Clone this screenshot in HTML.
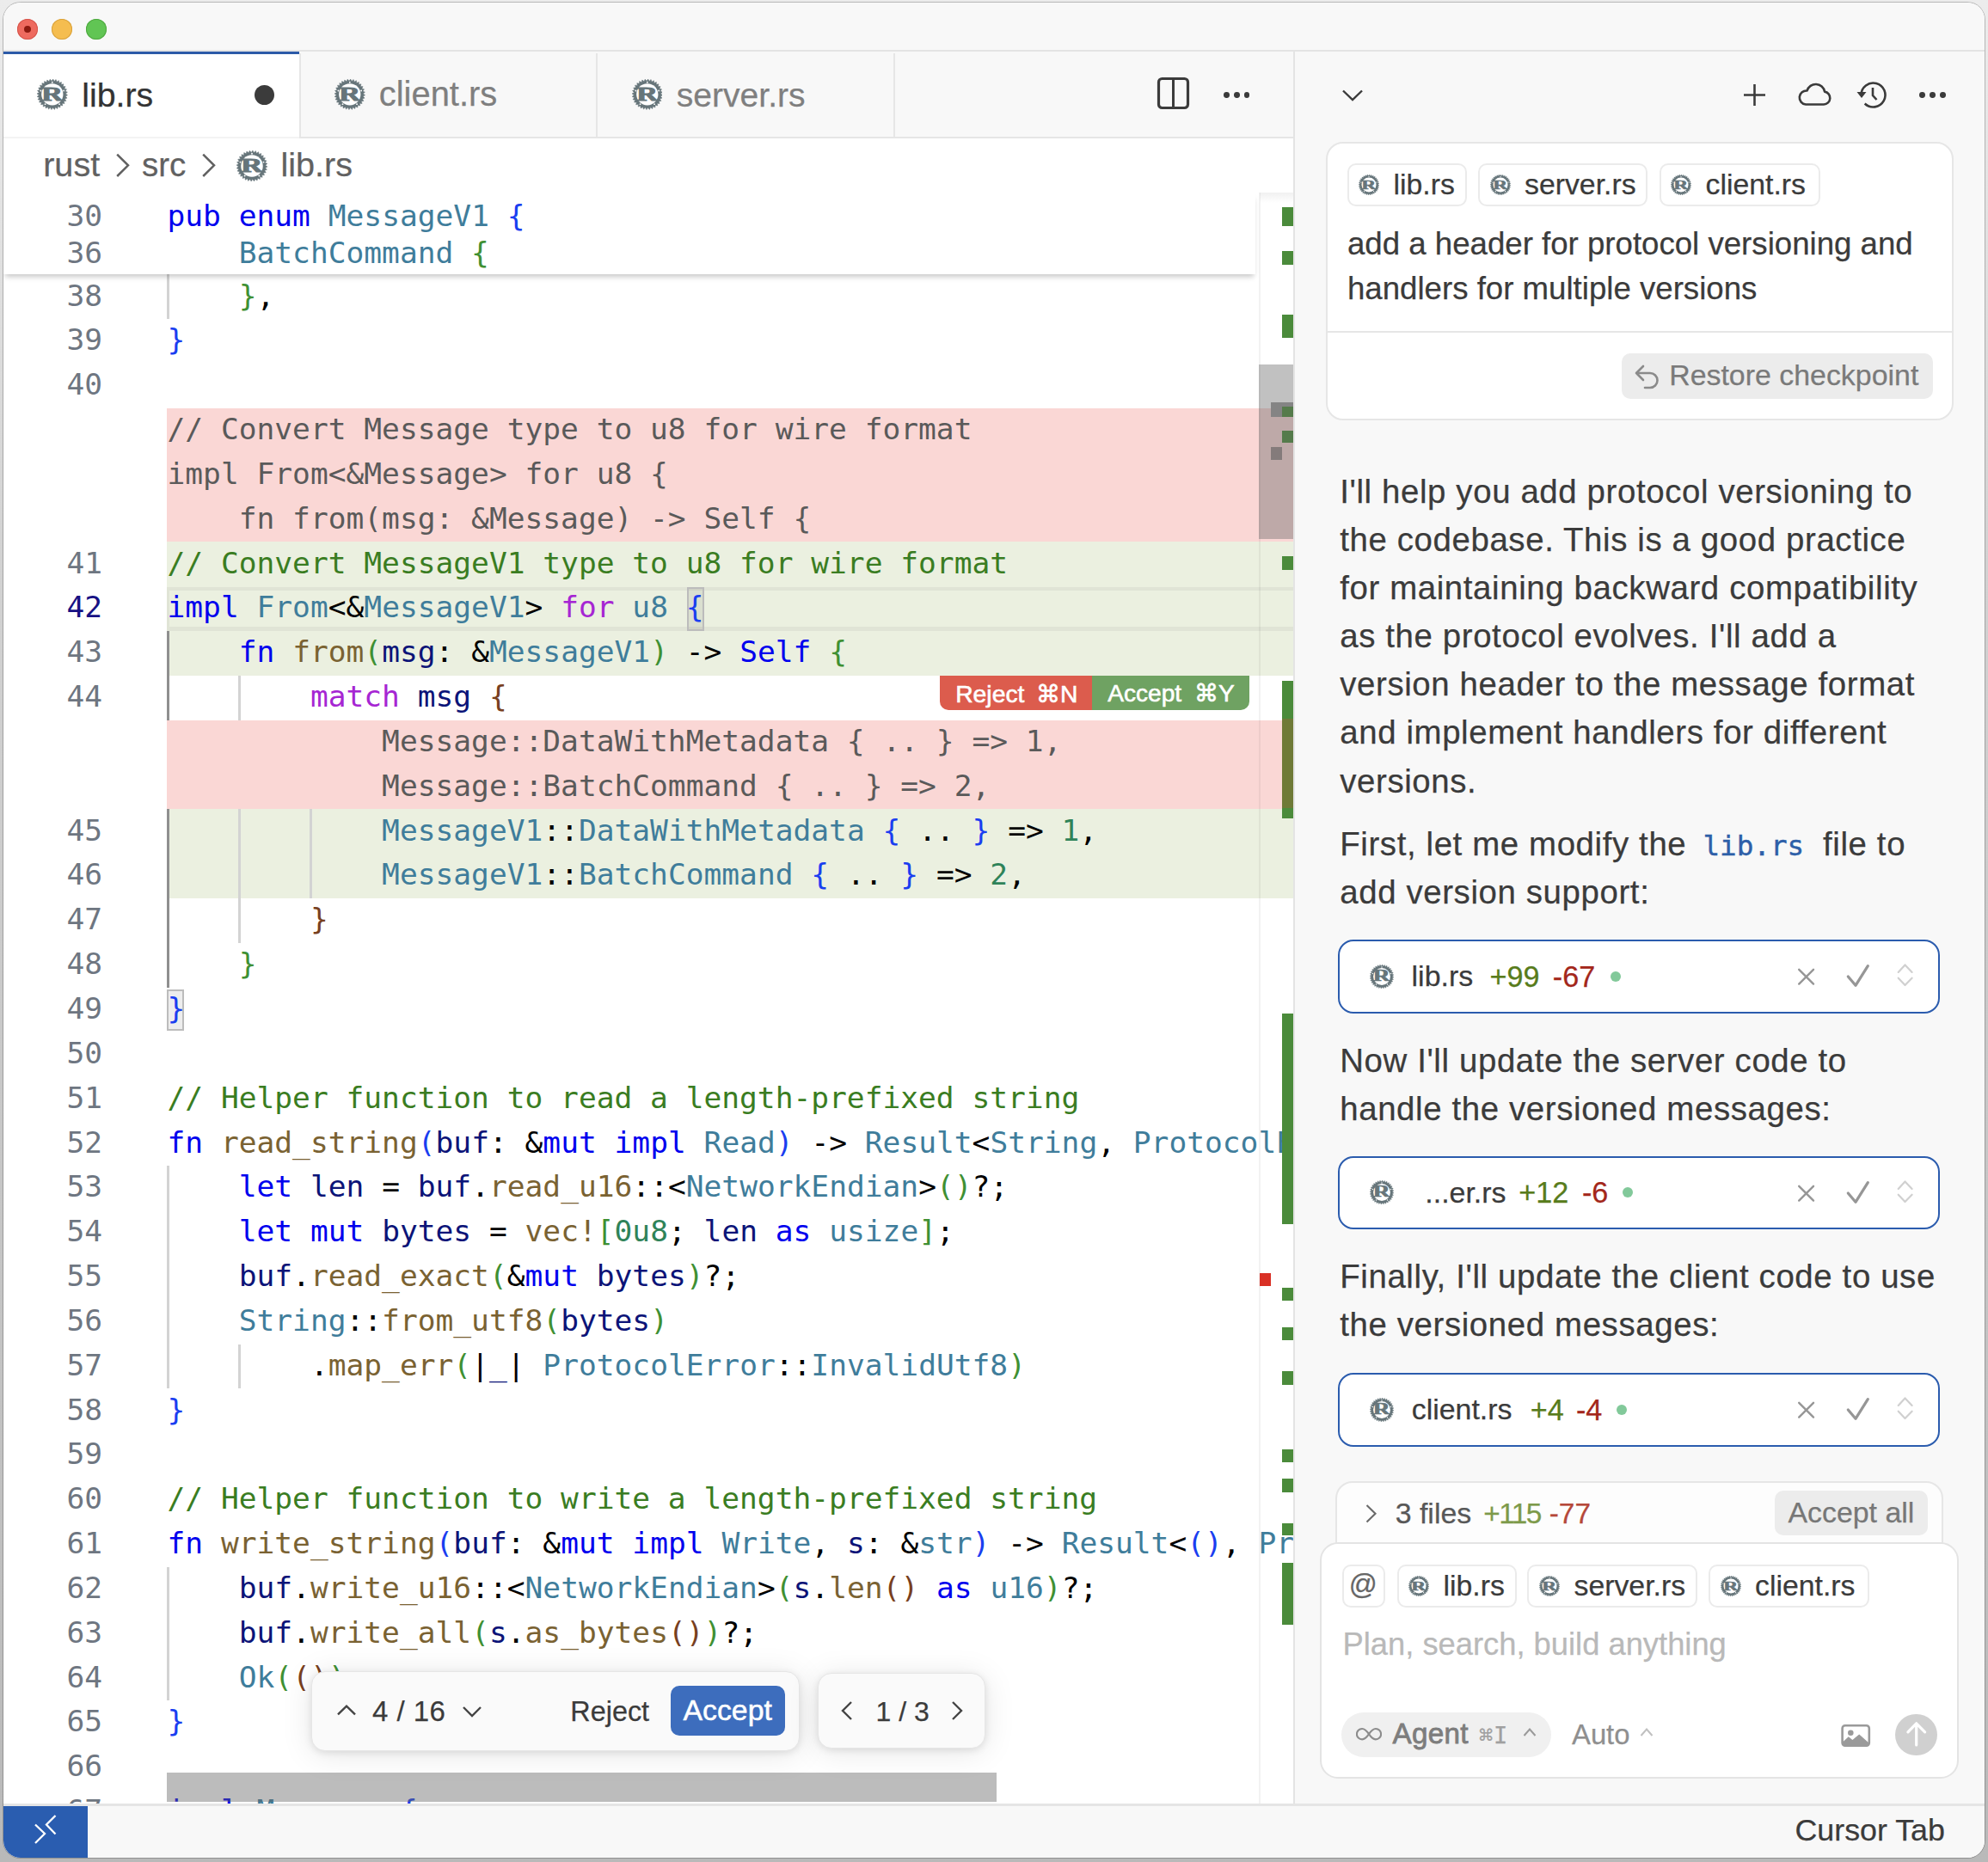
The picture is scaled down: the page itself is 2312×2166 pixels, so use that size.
<!DOCTYPE html><html lang="en"><head><meta charset="utf-8"><title>lib.rs - Cursor</title><style>
html,body{margin:0;padding:0}
body{width:2312px;height:2166px;position:relative;overflow:hidden;background:linear-gradient(#ececec,#d2d2d2 30%,#b9b9b9);font-family:'Liberation Sans',sans-serif;color:#3b3b3b}
.abs{position:absolute}
#win{position:absolute;left:4px;top:3px;width:2304.3px;height:2158.3px;border-radius:20px;overflow:hidden;background:#fff;box-shadow:0 0 0 1px rgba(0,0,0,.22)}
#win>*{position:absolute}
.code{position:absolute;left:0;white-space:pre;font-family:'DejaVu Sans Mono','Liberation Mono',monospace;font-size:34.56px;line-height:51.84px;height:51.84px;letter-spacing:0;color:#000}
.ln{position:absolute;width:115px;text-align:right;font-family:'DejaVu Sans Mono','Liberation Mono',monospace;font-size:34.56px;line-height:51.84px;height:51.84px;color:#6e7681}
.t{position:absolute;white-space:nowrap;line-height:1;-webkit-text-stroke:0.25px currentColor}
.pill{position:absolute;box-sizing:border-box;height:50px;border:2px solid #ebebeb;border-radius:10px;background:#fff}
</style></head><body><div id="win"><div style="left:0.0px;top:0.0px;width:2306.0px;height:56.0px;background:#f8f8f8"></div><div style="left:0.0px;top:55.0px;width:2306.0px;height:1.8px;background:#e4e4e4"></div><div style="left:16.0px;top:19.0px;width:24.0px;height:24.0px;border-radius:50%;background:#ee6a5f;box-shadow:inset 0 0 0 1px #d5564c"></div><div style="left:56.0px;top:19.0px;width:24.0px;height:24.0px;border-radius:50%;background:#f5bd4f;box-shadow:inset 0 0 0 1px #d9a23c"></div><div style="left:95.7px;top:19.0px;width:24.0px;height:24.0px;border-radius:50%;background:#61c554;box-shadow:inset 0 0 0 1px #4fa840"></div><div style="left:24.0px;top:27.0px;width:8.0px;height:8.0px;border-radius:50%;background:#8c1a10"></div><div style="left:0.0px;top:56.8px;width:1501.0px;height:101.2px;background:#f8f8f8"></div><div style="left:0.0px;top:155.5px;width:1501.0px;height:2.5px;background:#e6e6e6"></div><div style="left:0.0px;top:57.0px;width:344.0px;height:101.0px;background:#fff"></div><div style="left:0.0px;top:56.7px;width:344.0px;height:3.2px;background:#2c5aa8"></div><div style="left:0.0px;top:156.0px;width:344.0px;height:2.0px;background:#f3f3f3"></div><div style="left:343.5px;top:59.0px;width:2.0px;height:97.0px;background:#e6e6e6"></div><div style="left:689.2px;top:59.0px;width:2.0px;height:97.0px;background:#e6e6e6"></div><div style="left:1035.0px;top:59.0px;width:2.0px;height:97.0px;background:#e6e6e6"></div><svg style="position:absolute;left:39.2px;top:89.1px" width="35.6" height="35.6" viewBox="0 0 100 100"><polygon points="99.9,52.5 93.0,56.4 98.5,62.1 91.0,64.7 95.2,71.4 87.3,72.4 90.2,79.8 82.2,79.2 83.6,87.0 75.9,84.9 75.7,92.9 68.6,89.3 66.8,97.1 60.6,92.2 57.3,99.5 52.1,93.4 47.5,99.9 43.6,93.0 37.9,98.5 35.3,91.0 28.6,95.2 27.6,87.3 20.2,90.2 20.8,82.2 13.0,83.6 15.1,75.9 7.1,75.7 10.7,68.6 2.9,66.8 7.8,60.6 0.5,57.3 6.6,52.1 0.1,47.5 7.0,43.6 1.5,37.9 9.0,35.3 4.8,28.6 12.7,27.6 9.8,20.2 17.8,20.8 16.4,13.0 24.1,15.1 24.3,7.1 31.4,10.7 33.2,2.9 39.4,7.8 42.7,0.5 47.9,6.6 52.5,0.1 56.4,7.0 62.1,1.5 64.7,9.0 71.4,4.8 72.4,12.7 79.8,9.8 79.2,17.8 87.0,16.4 84.9,24.1 92.9,24.3 89.3,31.4 97.1,33.2 92.2,39.4 99.5,42.7 93.4,47.9" fill="#66757a" stroke="#66757a" stroke-width="1.5" stroke-linejoin="round"/><circle cx="50" cy="50" r="35.5" fill="#fff"/><text transform="translate(49,69.2) scale(1.5,1)" text-anchor="middle" font-family="Liberation Serif,serif" font-weight="700" font-size="65" fill="#66757a" stroke="#66757a" stroke-width="2.4">R</text><circle cx="50.0" cy="10.5" r="2.6" fill="#fff"/><circle cx="12.4" cy="37.8" r="2.6" fill="#fff"/><circle cx="87.6" cy="37.8" r="2.6" fill="#fff"/><circle cx="26.8" cy="82.0" r="2.6" fill="#fff"/><circle cx="73.2" cy="82.0" r="2.6" fill="#fff"/></svg><div class="t" style="left:91.3px;top:87.7px;font-size:39.3px;color:#333;font-family:'Liberation Sans',sans-serif;font-weight:400;letter-spacing:0px;">lib.rs</div><div style="left:291.8px;top:95.5px;width:23.0px;height:23.0px;border-radius:50%;background:#3b3b3b"></div><svg style="position:absolute;left:385px;top:89.1px" width="35.6" height="35.6" viewBox="0 0 100 100"><polygon points="99.9,52.5 93.0,56.4 98.5,62.1 91.0,64.7 95.2,71.4 87.3,72.4 90.2,79.8 82.2,79.2 83.6,87.0 75.9,84.9 75.7,92.9 68.6,89.3 66.8,97.1 60.6,92.2 57.3,99.5 52.1,93.4 47.5,99.9 43.6,93.0 37.9,98.5 35.3,91.0 28.6,95.2 27.6,87.3 20.2,90.2 20.8,82.2 13.0,83.6 15.1,75.9 7.1,75.7 10.7,68.6 2.9,66.8 7.8,60.6 0.5,57.3 6.6,52.1 0.1,47.5 7.0,43.6 1.5,37.9 9.0,35.3 4.8,28.6 12.7,27.6 9.8,20.2 17.8,20.8 16.4,13.0 24.1,15.1 24.3,7.1 31.4,10.7 33.2,2.9 39.4,7.8 42.7,0.5 47.9,6.6 52.5,0.1 56.4,7.0 62.1,1.5 64.7,9.0 71.4,4.8 72.4,12.7 79.8,9.8 79.2,17.8 87.0,16.4 84.9,24.1 92.9,24.3 89.3,31.4 97.1,33.2 92.2,39.4 99.5,42.7 93.4,47.9" fill="#66757a" stroke="#66757a" stroke-width="1.5" stroke-linejoin="round"/><circle cx="50" cy="50" r="35.5" fill="#fff"/><text transform="translate(49,69.2) scale(1.5,1)" text-anchor="middle" font-family="Liberation Serif,serif" font-weight="700" font-size="65" fill="#66757a" stroke="#66757a" stroke-width="2.4">R</text><circle cx="50.0" cy="10.5" r="2.6" fill="#fff"/><circle cx="12.4" cy="37.8" r="2.6" fill="#fff"/><circle cx="87.6" cy="37.8" r="2.6" fill="#fff"/><circle cx="26.8" cy="82.0" r="2.6" fill="#fff"/><circle cx="73.2" cy="82.0" r="2.6" fill="#fff"/></svg><div class="t" style="left:436.8px;top:87.2px;font-size:39.9px;color:#7f7f7f;font-family:'Liberation Sans',sans-serif;font-weight:400;letter-spacing:0px;">client.rs</div><svg style="position:absolute;left:730.8px;top:89.1px" width="35.6" height="35.6" viewBox="0 0 100 100"><polygon points="99.9,52.5 93.0,56.4 98.5,62.1 91.0,64.7 95.2,71.4 87.3,72.4 90.2,79.8 82.2,79.2 83.6,87.0 75.9,84.9 75.7,92.9 68.6,89.3 66.8,97.1 60.6,92.2 57.3,99.5 52.1,93.4 47.5,99.9 43.6,93.0 37.9,98.5 35.3,91.0 28.6,95.2 27.6,87.3 20.2,90.2 20.8,82.2 13.0,83.6 15.1,75.9 7.1,75.7 10.7,68.6 2.9,66.8 7.8,60.6 0.5,57.3 6.6,52.1 0.1,47.5 7.0,43.6 1.5,37.9 9.0,35.3 4.8,28.6 12.7,27.6 9.8,20.2 17.8,20.8 16.4,13.0 24.1,15.1 24.3,7.1 31.4,10.7 33.2,2.9 39.4,7.8 42.7,0.5 47.9,6.6 52.5,0.1 56.4,7.0 62.1,1.5 64.7,9.0 71.4,4.8 72.4,12.7 79.8,9.8 79.2,17.8 87.0,16.4 84.9,24.1 92.9,24.3 89.3,31.4 97.1,33.2 92.2,39.4 99.5,42.7 93.4,47.9" fill="#66757a" stroke="#66757a" stroke-width="1.5" stroke-linejoin="round"/><circle cx="50" cy="50" r="35.5" fill="#fff"/><text transform="translate(49,69.2) scale(1.5,1)" text-anchor="middle" font-family="Liberation Serif,serif" font-weight="700" font-size="65" fill="#66757a" stroke="#66757a" stroke-width="2.4">R</text><circle cx="50.0" cy="10.5" r="2.6" fill="#fff"/><circle cx="12.4" cy="37.8" r="2.6" fill="#fff"/><circle cx="87.6" cy="37.8" r="2.6" fill="#fff"/><circle cx="26.8" cy="82.0" r="2.6" fill="#fff"/><circle cx="73.2" cy="82.0" r="2.6" fill="#fff"/></svg><div class="t" style="left:782.8px;top:87.9px;font-size:39.1px;color:#7f7f7f;font-family:'Liberation Sans',sans-serif;font-weight:400;letter-spacing:0px;">server.rs</div><svg style="position:absolute;left:1341.0px;top:86.0px;" width="39" height="39" viewBox="0 0 39 39"><rect x="2.5" y="2.5" width="34" height="34" rx="4" fill="none" stroke="#3b3b3b" stroke-width="3.2"/><line x1="19.5" y1="3" x2="19.5" y2="36" stroke="#3b3b3b" stroke-width="3"/></svg><div style="left:1419.0px;top:104.0px;width:6.8px;height:6.8px;border-radius:50%;background:#3b3b3b"></div><div style="left:1430.9px;top:104.0px;width:6.8px;height:6.8px;border-radius:50%;background:#3b3b3b"></div><div style="left:1442.7px;top:104.0px;width:6.8px;height:6.8px;border-radius:50%;background:#3b3b3b"></div><div style="left:0.0px;top:158.0px;width:1501.0px;height:63.0px;background:#fff"></div><div class="t" style="left:46.2px;top:169.0px;font-size:39.6px;color:#616161;font-family:'Liberation Sans',sans-serif;font-weight:400;letter-spacing:0px;">rust</div><div class="t" style="left:161.0px;top:169.9px;font-size:38.5px;color:#616161;font-family:'Liberation Sans',sans-serif;font-weight:400;letter-spacing:0px;">src</div><svg style="position:absolute;left:128.0px;top:173.0px;" width="24" height="36" viewBox="0 0 24 36"><polyline points="4.2,3.6 17,16.3 4.2,29" fill="none" stroke="#616161" stroke-width="2.5"/></svg><svg style="position:absolute;left:228.0px;top:173.0px;" width="24" height="36" viewBox="0 0 24 36"><polyline points="4.2,3.6 17,16.3 4.2,29" fill="none" stroke="#616161" stroke-width="2.5"/></svg><svg style="position:absolute;left:271px;top:172px" width="36" height="36" viewBox="0 0 100 100"><polygon points="99.9,52.5 93.0,56.4 98.5,62.1 91.0,64.7 95.2,71.4 87.3,72.4 90.2,79.8 82.2,79.2 83.6,87.0 75.9,84.9 75.7,92.9 68.6,89.3 66.8,97.1 60.6,92.2 57.3,99.5 52.1,93.4 47.5,99.9 43.6,93.0 37.9,98.5 35.3,91.0 28.6,95.2 27.6,87.3 20.2,90.2 20.8,82.2 13.0,83.6 15.1,75.9 7.1,75.7 10.7,68.6 2.9,66.8 7.8,60.6 0.5,57.3 6.6,52.1 0.1,47.5 7.0,43.6 1.5,37.9 9.0,35.3 4.8,28.6 12.7,27.6 9.8,20.2 17.8,20.8 16.4,13.0 24.1,15.1 24.3,7.1 31.4,10.7 33.2,2.9 39.4,7.8 42.7,0.5 47.9,6.6 52.5,0.1 56.4,7.0 62.1,1.5 64.7,9.0 71.4,4.8 72.4,12.7 79.8,9.8 79.2,17.8 87.0,16.4 84.9,24.1 92.9,24.3 89.3,31.4 97.1,33.2 92.2,39.4 99.5,42.7 93.4,47.9" fill="#66757a" stroke="#66757a" stroke-width="1.5" stroke-linejoin="round"/><circle cx="50" cy="50" r="35.5" fill="#fff"/><text transform="translate(49,69.2) scale(1.5,1)" text-anchor="middle" font-family="Liberation Serif,serif" font-weight="700" font-size="65" fill="#66757a" stroke="#66757a" stroke-width="2.4">R</text><circle cx="50.0" cy="10.5" r="2.6" fill="#fff"/><circle cx="12.4" cy="37.8" r="2.6" fill="#fff"/><circle cx="87.6" cy="37.8" r="2.6" fill="#fff"/><circle cx="26.8" cy="82.0" r="2.6" fill="#fff"/><circle cx="73.2" cy="82.0" r="2.6" fill="#fff"/></svg><div class="t" style="left:322.4px;top:169.0px;font-size:39.6px;color:#616161;font-family:'Liberation Sans',sans-serif;font-weight:400;letter-spacing:0px;">lib.rs</div><div style="left:190.0px;top:471.8px;width:1310.0px;height:155.5px;background:#fad7d5"></div><div style="left:190.0px;top:627.3px;width:1310.0px;height:155.5px;background:#ebf0e0"></div><div style="left:190.0px;top:834.7px;width:1310.0px;height:103.7px;background:#fad7d5"></div><div style="left:190.0px;top:938.4px;width:1310.0px;height:103.7px;background:#ebf0e0"></div><div style="left:190.0px;top:679.6px;width:1310.0px;height:4.4px;background:#e0e4d6"></div><div style="left:190.0px;top:726.4px;width:1310.0px;height:4.6px;background:#e0e4d6"></div><div style="left:190.0px;top:679.6px;width:3.0px;height:51.8px;background:#e0e4d6"></div><div style="left:189.9px;top:316.3px;width:2.9px;height:51.8px;background:#d3d3d3"></div><div style="left:189.9px;top:731.0px;width:2.9px;height:103.7px;background:#8f8f8f"></div><div style="left:189.9px;top:938.4px;width:2.9px;height:207.4px;background:#8f8f8f"></div><div style="left:273.1px;top:782.9px;width:2.9px;height:51.8px;background:#d3d3d3"></div><div style="left:273.1px;top:938.4px;width:2.9px;height:155.5px;background:#d3d3d3"></div><div style="left:356.3px;top:938.4px;width:2.9px;height:103.7px;background:#d3d3d3"></div><div style="left:189.9px;top:1353.1px;width:2.9px;height:259.2px;background:#d3d3d3"></div><div style="left:273.1px;top:1560.5px;width:2.9px;height:51.8px;background:#d3d3d3"></div><div style="left:189.9px;top:1819.7px;width:2.9px;height:155.5px;background:#d3d3d3"></div><div style="left:794.5px;top:679.7px;width:20.4px;height:51.4px;box-sizing:border-box;border:2px solid #bcbcbc;background:rgba(0,0,0,.07)"></div><div style="left:189.6px;top:1147.7px;width:20.4px;height:48.4px;box-sizing:border-box;border:2px solid #bcbcbc;background:rgba(0,0,0,.07)"></div><div class="ln" style="left:0;top:315.5px;color:#6e7681">38</div><div class="code" style="left:190.5px;top:315.5px"><span style="color:#000000">    </span><span style="color:#3f9033">}</span><span style="color:#000000">,</span></div><div class="ln" style="left:0;top:367.3px;color:#6e7681">39</div><div class="code" style="left:190.5px;top:367.3px"><span style="color:#1a3ef0">}</span></div><div class="ln" style="left:0;top:419.2px;color:#6e7681">40</div><div class="code" style="left:190.5px;top:471.0px"><span style="color:#5a5a5a">// Convert Message type to u8 for wire format</span></div><div class="code" style="left:190.5px;top:522.9px"><span style="color:#5a5a5a">impl From&lt;&amp;Message&gt; for u8 {</span></div><div class="code" style="left:190.5px;top:574.7px"><span style="color:#5a5a5a">    fn from(msg: &amp;Message) -&gt; Self {</span></div><div class="ln" style="left:0;top:626.5px;color:#6e7681">41</div><div class="code" style="left:190.5px;top:626.5px"><span style="color:#3a7d22">// Convert MessageV1 type to u8 for wire format</span></div><div class="ln" style="left:0;top:678.4px;color:#171184">42</div><div class="code" style="left:190.5px;top:678.4px"><span style="color:#0000ee">impl</span><span style="color:#000000"> </span><span style="color:#3f7d9b">From</span><span style="color:#000000">&lt;&amp;</span><span style="color:#3f7d9b">MessageV1</span><span style="color:#000000">&gt; </span><span style="color:#a626d3">for</span><span style="color:#000000"> </span><span style="color:#3f7d9b">u8</span><span style="color:#000000"> </span><span style="color:#1a3ef0">{</span></div><div class="ln" style="left:0;top:730.2px;color:#6e7681">43</div><div class="code" style="left:190.5px;top:730.2px"><span style="color:#000000">    </span><span style="color:#0000ee">fn</span><span style="color:#000000"> </span><span style="color:#7a6232">from</span><span style="color:#3f9033">(</span><span style="color:#0c1478">msg</span><span style="color:#000000">: &amp;</span><span style="color:#3f7d9b">MessageV1</span><span style="color:#3f9033">)</span><span style="color:#000000"> -&gt; </span><span style="color:#0000ee">Self</span><span style="color:#000000"> </span><span style="color:#3f9033">{</span></div><div class="ln" style="left:0;top:782.1px;color:#6e7681">44</div><div class="code" style="left:190.5px;top:782.1px"><span style="color:#000000">        </span><span style="color:#a626d3">match</span><span style="color:#000000"> </span><span style="color:#0c1478">msg</span><span style="color:#000000"> </span><span style="color:#78401e">{</span></div><div class="code" style="left:190.5px;top:833.9px"><span style="color:#5a5a5a">            Message::DataWithMetadata { .. } =&gt; 1,</span></div><div class="code" style="left:190.5px;top:885.7px"><span style="color:#5a5a5a">            Message::BatchCommand { .. } =&gt; 2,</span></div><div class="ln" style="left:0;top:937.6px;color:#6e7681">45</div><div class="code" style="left:190.5px;top:937.6px"><span style="color:#000000">            </span><span style="color:#3f7d9b">MessageV1</span><span style="color:#000000">::</span><span style="color:#3f7d9b">DataWithMetadata</span><span style="color:#000000"> </span><span style="color:#1a3ef0">{</span><span style="color:#000000"> .. </span><span style="color:#1a3ef0">}</span><span style="color:#000000"> =&gt; </span><span style="color:#2f8359">1</span><span style="color:#000000">,</span></div><div class="ln" style="left:0;top:989.4px;color:#6e7681">46</div><div class="code" style="left:190.5px;top:989.4px"><span style="color:#000000">            </span><span style="color:#3f7d9b">MessageV1</span><span style="color:#000000">::</span><span style="color:#3f7d9b">BatchCommand</span><span style="color:#000000"> </span><span style="color:#1a3ef0">{</span><span style="color:#000000"> .. </span><span style="color:#1a3ef0">}</span><span style="color:#000000"> =&gt; </span><span style="color:#2f8359">2</span><span style="color:#000000">,</span></div><div class="ln" style="left:0;top:1041.3px;color:#6e7681">47</div><div class="code" style="left:190.5px;top:1041.3px"><span style="color:#000000">        </span><span style="color:#78401e">}</span></div><div class="ln" style="left:0;top:1093.1px;color:#6e7681">48</div><div class="code" style="left:190.5px;top:1093.1px"><span style="color:#000000">    </span><span style="color:#3f9033">}</span></div><div class="ln" style="left:0;top:1144.9px;color:#6e7681">49</div><div class="code" style="left:190.5px;top:1144.9px"><span style="color:#1a3ef0">}</span></div><div class="ln" style="left:0;top:1196.8px;color:#6e7681">50</div><div class="ln" style="left:0;top:1248.6px;color:#6e7681">51</div><div class="code" style="left:190.5px;top:1248.6px"><span style="color:#3a7d22">// Helper function to read a length-prefixed string</span></div><div class="ln" style="left:0;top:1300.5px;color:#6e7681">52</div><div class="code" style="left:190.5px;top:1300.5px"><span style="color:#0000ee">fn</span><span style="color:#000000"> </span><span style="color:#7a6232">read_string</span><span style="color:#1a3ef0">(</span><span style="color:#0c1478">buf</span><span style="color:#000000">: &amp;</span><span style="color:#0000ee">mut</span><span style="color:#000000"> </span><span style="color:#0000ee">impl</span><span style="color:#000000"> </span><span style="color:#3f7d9b">Read</span><span style="color:#1a3ef0">)</span><span style="color:#000000"> -&gt; </span><span style="color:#3f7d9b">Result</span><span style="color:#000000">&lt;</span><span style="color:#3f7d9b">String</span><span style="color:#000000">, </span><span style="color:#3f7d9b">ProtocolError</span><span style="color:#000000">&gt; </span><span style="color:#1a3ef0">{</span></div><div class="ln" style="left:0;top:1352.3px;color:#6e7681">53</div><div class="code" style="left:190.5px;top:1352.3px"><span style="color:#000000">    </span><span style="color:#0000ee">let</span><span style="color:#000000"> </span><span style="color:#0c1478">len</span><span style="color:#000000"> = </span><span style="color:#0c1478">buf</span><span style="color:#000000">.</span><span style="color:#7a6232">read_u16</span><span style="color:#000000">::&lt;</span><span style="color:#3f7d9b">NetworkEndian</span><span style="color:#000000">&gt;</span><span style="color:#3f9033">()</span><span style="color:#000000">?;</span></div><div class="ln" style="left:0;top:1404.1px;color:#6e7681">54</div><div class="code" style="left:190.5px;top:1404.1px"><span style="color:#000000">    </span><span style="color:#0000ee">let</span><span style="color:#000000"> </span><span style="color:#0000ee">mut</span><span style="color:#000000"> </span><span style="color:#0c1478">bytes</span><span style="color:#000000"> = </span><span style="color:#7a6232">vec!</span><span style="color:#3f9033">[</span><span style="color:#2f8359">0u8</span><span style="color:#000000">; </span><span style="color:#0c1478">len</span><span style="color:#000000"> </span><span style="color:#0000ee">as</span><span style="color:#000000"> </span><span style="color:#3f7d9b">usize</span><span style="color:#3f9033">]</span><span style="color:#000000">;</span></div><div class="ln" style="left:0;top:1456.0px;color:#6e7681">55</div><div class="code" style="left:190.5px;top:1456.0px"><span style="color:#000000">    </span><span style="color:#0c1478">buf</span><span style="color:#000000">.</span><span style="color:#7a6232">read_exact</span><span style="color:#3f9033">(</span><span style="color:#000000">&amp;</span><span style="color:#0000ee">mut</span><span style="color:#000000"> </span><span style="color:#0c1478">bytes</span><span style="color:#3f9033">)</span><span style="color:#000000">?;</span></div><div class="ln" style="left:0;top:1507.8px;color:#6e7681">56</div><div class="code" style="left:190.5px;top:1507.8px"><span style="color:#000000">    </span><span style="color:#3f7d9b">String</span><span style="color:#000000">::</span><span style="color:#7a6232">from_utf8</span><span style="color:#3f9033">(</span><span style="color:#0c1478">bytes</span><span style="color:#3f9033">)</span></div><div class="ln" style="left:0;top:1559.7px;color:#6e7681">57</div><div class="code" style="left:190.5px;top:1559.7px"><span style="color:#000000">        .</span><span style="color:#7a6232">map_err</span><span style="color:#3f9033">(</span><span style="color:#000000">|</span><span style="color:#0c1478">_</span><span style="color:#000000">| </span><span style="color:#3f7d9b">ProtocolError</span><span style="color:#000000">::</span><span style="color:#3f7d9b">InvalidUtf8</span><span style="color:#3f9033">)</span></div><div class="ln" style="left:0;top:1611.5px;color:#6e7681">58</div><div class="code" style="left:190.5px;top:1611.5px"><span style="color:#1a3ef0">}</span></div><div class="ln" style="left:0;top:1663.3px;color:#6e7681">59</div><div class="ln" style="left:0;top:1715.2px;color:#6e7681">60</div><div class="code" style="left:190.5px;top:1715.2px"><span style="color:#3a7d22">// Helper function to write a length-prefixed string</span></div><div class="ln" style="left:0;top:1767.0px;color:#6e7681">61</div><div class="code" style="left:190.5px;top:1767.0px"><span style="color:#0000ee">fn</span><span style="color:#000000"> </span><span style="color:#7a6232">write_string</span><span style="color:#1a3ef0">(</span><span style="color:#0c1478">buf</span><span style="color:#000000">: &amp;</span><span style="color:#0000ee">mut</span><span style="color:#000000"> </span><span style="color:#0000ee">impl</span><span style="color:#000000"> </span><span style="color:#3f7d9b">Write</span><span style="color:#000000">, </span><span style="color:#0c1478">s</span><span style="color:#000000">: &amp;</span><span style="color:#3f7d9b">str</span><span style="color:#1a3ef0">)</span><span style="color:#000000"> -&gt; </span><span style="color:#3f7d9b">Result</span><span style="color:#000000">&lt;</span><span style="color:#1a3ef0">()</span><span style="color:#000000">, </span><span style="color:#3f7d9b">ProtocolError</span><span style="color:#000000">&gt; </span><span style="color:#1a3ef0">{</span></div><div class="ln" style="left:0;top:1818.9px;color:#6e7681">62</div><div class="code" style="left:190.5px;top:1818.9px"><span style="color:#000000">    </span><span style="color:#0c1478">buf</span><span style="color:#000000">.</span><span style="color:#7a6232">write_u16</span><span style="color:#000000">::&lt;</span><span style="color:#3f7d9b">NetworkEndian</span><span style="color:#000000">&gt;</span><span style="color:#3f9033">(</span><span style="color:#0c1478">s</span><span style="color:#000000">.</span><span style="color:#7a6232">len</span><span style="color:#78401e">()</span><span style="color:#000000"> </span><span style="color:#0000ee">as</span><span style="color:#000000"> </span><span style="color:#3f7d9b">u16</span><span style="color:#3f9033">)</span><span style="color:#000000">?;</span></div><div class="ln" style="left:0;top:1870.7px;color:#6e7681">63</div><div class="code" style="left:190.5px;top:1870.7px"><span style="color:#000000">    </span><span style="color:#0c1478">buf</span><span style="color:#000000">.</span><span style="color:#7a6232">write_all</span><span style="color:#3f9033">(</span><span style="color:#0c1478">s</span><span style="color:#000000">.</span><span style="color:#7a6232">as_bytes</span><span style="color:#78401e">()</span><span style="color:#3f9033">)</span><span style="color:#000000">?;</span></div><div class="ln" style="left:0;top:1922.5px;color:#6e7681">64</div><div class="code" style="left:190.5px;top:1922.5px"><span style="color:#000000">    </span><span style="color:#3f7d9b">Ok</span><span style="color:#3f9033">(</span><span style="color:#78401e">()</span><span style="color:#3f9033">)</span></div><div class="ln" style="left:0;top:1974.4px;color:#6e7681">65</div><div class="code" style="left:190.5px;top:1974.4px"><span style="color:#1a3ef0">}</span></div><div class="ln" style="left:0;top:2026.2px;color:#6e7681">66</div><div class="ln" style="left:0;top:2078.1px;color:#6e7681">67</div><div class="code" style="left:190.5px;top:2078.1px"><span style="color:#0000ee">impl</span><span style="color:#000000"> </span><span style="color:#3f7d9b">Message</span><span style="color:#000000"> </span><span style="color:#1a3ef0">{</span></div><div style="left:1088.5px;top:783.0px;width:178.0px;height:40.0px;background:#dc5c4d;border-radius:0 0 0 10px"></div><div style="left:1266.0px;top:783.0px;width:183.0px;height:40.0px;background:#6fa262;border-radius:0 0 10px 0"></div><div class="t" style="left:1107.2px;top:789.5px;font-size:28.3px;color:#fff;font-family:'Liberation Sans',sans-serif;font-weight:400;letter-spacing:0px;-webkit-text-stroke:0.6px #fff;">Reject</div><div class="t" style="left:1201.0px;top:789.5px;font-size:28.3px;color:#fff;font-family:'Liberation Sans',sans-serif;font-weight:400;letter-spacing:0px;-webkit-text-stroke:0.6px #fff;">⌘N</div><div class="t" style="left:1284.2px;top:789.7px;font-size:28.1px;color:#fff;font-family:'Liberation Sans',sans-serif;font-weight:400;letter-spacing:0px;-webkit-text-stroke:0.6px #fff;">Accept</div><div class="t" style="left:1385.0px;top:789.7px;font-size:28.1px;color:#fff;font-family:'Liberation Sans',sans-serif;font-weight:400;letter-spacing:0px;-webkit-text-stroke:0.6px #fff;">⌘Y</div><div style="left:0.0px;top:221.0px;width:1456.0px;height:95.0px;background:#fff;box-shadow:0 5px 6px -2px rgba(0,0,0,.22);overflow:hidden"><div class="ln" style="left:0;top:1.6px">30</div><div class="code" style="left:190.5px;top:1.6px"><span style="color:#0000ee">pub</span><span style="color:#000000"> </span><span style="color:#0000ee">enum</span><span style="color:#000000"> </span><span style="color:#3f7d9b">MessageV1</span><span style="color:#000000"> </span><span style="color:#1a3ef0">{</span></div><div class="ln" style="left:0;top:44.6px">36</div><div class="code" style="left:190.5px;top:44.6px"><span style="color:#000000">    </span><span style="color:#3f7d9b">BatchCommand</span><span style="color:#000000"> </span><span style="color:#3f9033">{</span></div></div><div style="left:1460.0px;top:221.0px;width:1.5px;height:1876.0px;background:rgba(0,0,0,.05)"></div><div style="left:1461.0px;top:221.0px;width:39.0px;height:12.0px;background:linear-gradient(rgba(0,0,0,.06),rgba(0,0,0,0))"></div><div style="left:1487.0px;top:238.0px;width:13.5px;height:22.0px;background:#4b8b3b"></div><div style="left:1487.0px;top:289.0px;width:13.5px;height:16.0px;background:#4b8b3b"></div><div style="left:1487.0px;top:363.0px;width:13.5px;height:27.0px;background:#4b8b3b"></div><div style="left:1487.0px;top:644.0px;width:13.5px;height:15.5px;background:#4b8b3b"></div><div style="left:1487.0px;top:789.0px;width:13.5px;height:159.6px;background:#4b8b3b"></div><div style="left:1487.0px;top:1175.6px;width:13.5px;height:245.2px;background:#4b8b3b"></div><div style="left:1487.0px;top:1494.6px;width:13.5px;height:15.7px;background:#4b8b3b"></div><div style="left:1487.0px;top:1540.7px;width:13.5px;height:15.7px;background:#4b8b3b"></div><div style="left:1487.0px;top:1591.7px;width:13.5px;height:16.3px;background:#4b8b3b"></div><div style="left:1487.0px;top:1682.8px;width:13.5px;height:15.2px;background:#4b8b3b"></div><div style="left:1487.0px;top:1717.0px;width:13.5px;height:15.7px;background:#4b8b3b"></div><div style="left:1487.0px;top:1768.5px;width:13.5px;height:14.5px;background:#4b8b3b"></div><div style="left:1487.0px;top:1814.6px;width:13.5px;height:72.2px;background:#4b8b3b"></div><div style="left:1487.0px;top:832.9px;width:13.5px;height:104.0px;background:#6f7a37"></div><div style="left:1461.0px;top:1478.3px;width:13.0px;height:15.2px;background:#d93025"></div><div style="left:1474.0px;top:465.0px;width:13.0px;height:17.0px;background:#9a9a9a"></div><div style="left:1487.0px;top:465.0px;width:13.5px;height:5.0px;background:#9a9a9a"></div><div style="left:1487.0px;top:470.0px;width:13.5px;height:12.0px;background:#4b8b3b"></div><div style="left:1487.0px;top:497.6px;width:13.5px;height:14.5px;background:#4b8b3b"></div><div style="left:1474.0px;top:517.0px;width:13.0px;height:15.0px;background:#9a8a8a"></div><div style="left:1460.0px;top:420.5px;width:40.0px;height:203.5px;background:rgba(100,100,100,.4)"></div><div style="left:190.0px;top:2059.0px;width:964.7px;height:33.8px;background:rgba(100,100,100,.43)"></div><div style="left:1500.0px;top:57.0px;width:2.0px;height:2040.0px;background:#e4e4e4"></div><div style="left:357.8px;top:1940.7px;width:568.4px;height:93.0px;box-sizing:border-box;background:#fafafa;border:1.5px solid #e6e6e6;border-radius:16px;box-shadow:0 2px 8px rgba(0,0,0,.10),0 4px 36px rgba(0,0,0,.10)"></div><div style="left:947.3px;top:1943.4px;width:194.7px;height:87.6px;box-sizing:border-box;background:#fafafa;border:1.5px solid #e6e6e6;border-radius:16px;box-shadow:0 2px 8px rgba(0,0,0,.10),0 4px 36px rgba(0,0,0,.10)"></div><svg style="position:absolute;left:386.5px;top:1978.0px;" width="24" height="16" viewBox="0 0 24 16"><polyline points="2,13.4 12,3.6 22,13.4" fill="none" stroke="#444" stroke-width="2.4"/></svg><div class="t" style="left:429.0px;top:1971.1px;font-size:33.0px;color:#3b3b3b;font-family:'Liberation Sans',sans-serif;font-weight:400;letter-spacing:0.45px;">4 / 16</div><svg style="position:absolute;left:532.5px;top:1979.5px;" width="24" height="16" viewBox="0 0 24 16"><polyline points="2,3 12,13 22,3" fill="none" stroke="#444" stroke-width="2.4"/></svg><div class="t" style="left:659.3px;top:1971.6px;font-size:32.4px;color:#3b3b3b;font-family:'Liberation Sans',sans-serif;font-weight:400;letter-spacing:0px;">Reject</div><div style="left:776.1px;top:1958.2px;width:133.2px;height:58.1px;background:#3d6dbd;border-radius:10px"></div><div class="t" style="left:790.5px;top:1970.4px;font-size:33.8px;color:#fff;font-family:'Liberation Sans',sans-serif;font-weight:400;letter-spacing:0px;-webkit-text-stroke:0.5px #fff;">Accept</div><svg style="position:absolute;left:973.0px;top:1975.0px;" width="16" height="24" viewBox="0 0 16 24"><polyline points="13,2 3,12 13,22" fill="none" stroke="#444" stroke-width="2.4"/></svg><div class="t" style="left:1014.5px;top:1971.9px;font-size:32.0px;color:#3b3b3b;font-family:'Liberation Sans',sans-serif;font-weight:400;letter-spacing:0px;">1 / 3</div><svg style="position:absolute;left:1101.0px;top:1975.0px;" width="16" height="24" viewBox="0 0 16 24"><polyline points="3,2 13,12 3,22" fill="none" stroke="#444" stroke-width="2.4"/></svg><div style="left:1502.0px;top:57.0px;width:802.0px;height:2040.0px;background:#f8f8f8"></div><svg style="position:absolute;left:1556.0px;top:100.0px;" width="26" height="16" viewBox="0 0 26 16"><polyline points="2,2.5 13,13 24,2.5" fill="none" stroke="#3b3b3b" stroke-width="2.4"/></svg><svg style="position:absolute;left:2022.0px;top:93.0px;" width="29" height="29" viewBox="0 0 29 29"><path d="M14.5 2v25M2 14.5h25" stroke="#3b3b3b" stroke-width="2.6" fill="none"/></svg><svg style="position:absolute;left:2085.0px;top:93.0px;" width="42" height="29" viewBox="0 0 42 29"><path d="M11 25.5h21a7.5 7.5 0 0 0 1-14.9A10.5 10.5 0 0 0 12.6 9.5 8 8 0 0 0 11 25.5z" fill="none" stroke="#3b3b3b" stroke-width="2.6" stroke-linejoin="round"/></svg><svg style="position:absolute;left:2154.0px;top:90.0px;" width="38" height="35" viewBox="0 0 38 35"><path d="M6.5 17.5a14 14 0 1 1 4.2 10" fill="none" stroke="#3b3b3b" stroke-width="2.6"/><path d="M1.5 14l5.5 7 5.5-7z" fill="#3b3b3b"/><path d="M20 9v9l4.5 5" fill="none" stroke="#3b3b3b" stroke-width="2.6"/></svg><div style="left:2228.1px;top:104.0px;width:6.8px;height:6.8px;border-radius:50%;background:#3b3b3b"></div><div style="left:2240.0px;top:104.0px;width:6.8px;height:6.8px;border-radius:50%;background:#3b3b3b"></div><div style="left:2251.8px;top:104.0px;width:6.8px;height:6.8px;border-radius:50%;background:#3b3b3b"></div><div style="left:1538.0px;top:162.0px;width:730.0px;height:324.0px;box-sizing:border-box;background:#fff;border:2px solid #e6e6e6;border-radius:20px"></div><div style="left:1540.0px;top:382.3px;width:726.0px;height:2.0px;background:#e6e6e6"></div><div class="pill" style="left:1562.5px;top:187.0px;width:139.5px;height:50.0px;"></div><svg style="position:absolute;left:1576px;top:199.6px" width="24" height="24" viewBox="0 0 100 100"><polygon points="99.9,52.5 93.0,56.4 98.5,62.1 91.0,64.7 95.2,71.4 87.3,72.4 90.2,79.8 82.2,79.2 83.6,87.0 75.9,84.9 75.7,92.9 68.6,89.3 66.8,97.1 60.6,92.2 57.3,99.5 52.1,93.4 47.5,99.9 43.6,93.0 37.9,98.5 35.3,91.0 28.6,95.2 27.6,87.3 20.2,90.2 20.8,82.2 13.0,83.6 15.1,75.9 7.1,75.7 10.7,68.6 2.9,66.8 7.8,60.6 0.5,57.3 6.6,52.1 0.1,47.5 7.0,43.6 1.5,37.9 9.0,35.3 4.8,28.6 12.7,27.6 9.8,20.2 17.8,20.8 16.4,13.0 24.1,15.1 24.3,7.1 31.4,10.7 33.2,2.9 39.4,7.8 42.7,0.5 47.9,6.6 52.5,0.1 56.4,7.0 62.1,1.5 64.7,9.0 71.4,4.8 72.4,12.7 79.8,9.8 79.2,17.8 87.0,16.4 84.9,24.1 92.9,24.3 89.3,31.4 97.1,33.2 92.2,39.4 99.5,42.7 93.4,47.9" fill="#66757a" stroke="#66757a" stroke-width="1.5" stroke-linejoin="round"/><circle cx="50" cy="50" r="35.5" fill="#fff"/><text transform="translate(49,69.2) scale(1.5,1)" text-anchor="middle" font-family="Liberation Serif,serif" font-weight="700" font-size="65" fill="#66757a" stroke="#66757a" stroke-width="2.4">R</text><circle cx="50.0" cy="10.5" r="2.6" fill="#fff"/><circle cx="12.4" cy="37.8" r="2.6" fill="#fff"/><circle cx="87.6" cy="37.8" r="2.6" fill="#fff"/><circle cx="26.8" cy="82.0" r="2.6" fill="#fff"/><circle cx="73.2" cy="82.0" r="2.6" fill="#fff"/></svg><div class="t" style="left:1616.5px;top:195.1px;font-size:33.8px;color:#3b3b3b;font-family:'Liberation Sans',sans-serif;font-weight:400;letter-spacing:0px;">lib.rs</div><div class="pill" style="left:1715.0px;top:187.0px;width:197.0px;height:50.0px;"></div><svg style="position:absolute;left:1729px;top:199.6px" width="24" height="24" viewBox="0 0 100 100"><polygon points="99.9,52.5 93.0,56.4 98.5,62.1 91.0,64.7 95.2,71.4 87.3,72.4 90.2,79.8 82.2,79.2 83.6,87.0 75.9,84.9 75.7,92.9 68.6,89.3 66.8,97.1 60.6,92.2 57.3,99.5 52.1,93.4 47.5,99.9 43.6,93.0 37.9,98.5 35.3,91.0 28.6,95.2 27.6,87.3 20.2,90.2 20.8,82.2 13.0,83.6 15.1,75.9 7.1,75.7 10.7,68.6 2.9,66.8 7.8,60.6 0.5,57.3 6.6,52.1 0.1,47.5 7.0,43.6 1.5,37.9 9.0,35.3 4.8,28.6 12.7,27.6 9.8,20.2 17.8,20.8 16.4,13.0 24.1,15.1 24.3,7.1 31.4,10.7 33.2,2.9 39.4,7.8 42.7,0.5 47.9,6.6 52.5,0.1 56.4,7.0 62.1,1.5 64.7,9.0 71.4,4.8 72.4,12.7 79.8,9.8 79.2,17.8 87.0,16.4 84.9,24.1 92.9,24.3 89.3,31.4 97.1,33.2 92.2,39.4 99.5,42.7 93.4,47.9" fill="#66757a" stroke="#66757a" stroke-width="1.5" stroke-linejoin="round"/><circle cx="50" cy="50" r="35.5" fill="#fff"/><text transform="translate(49,69.2) scale(1.5,1)" text-anchor="middle" font-family="Liberation Serif,serif" font-weight="700" font-size="65" fill="#66757a" stroke="#66757a" stroke-width="2.4">R</text><circle cx="50.0" cy="10.5" r="2.6" fill="#fff"/><circle cx="12.4" cy="37.8" r="2.6" fill="#fff"/><circle cx="87.6" cy="37.8" r="2.6" fill="#fff"/><circle cx="26.8" cy="82.0" r="2.6" fill="#fff"/><circle cx="73.2" cy="82.0" r="2.6" fill="#fff"/></svg><div class="t" style="left:1769.0px;top:195.1px;font-size:33.8px;color:#3b3b3b;font-family:'Liberation Sans',sans-serif;font-weight:400;letter-spacing:0px;">server.rs</div><div class="pill" style="left:1925.5px;top:187.0px;width:187.0px;height:50.0px;"></div><svg style="position:absolute;left:1939px;top:199.6px" width="24" height="24" viewBox="0 0 100 100"><polygon points="99.9,52.5 93.0,56.4 98.5,62.1 91.0,64.7 95.2,71.4 87.3,72.4 90.2,79.8 82.2,79.2 83.6,87.0 75.9,84.9 75.7,92.9 68.6,89.3 66.8,97.1 60.6,92.2 57.3,99.5 52.1,93.4 47.5,99.9 43.6,93.0 37.9,98.5 35.3,91.0 28.6,95.2 27.6,87.3 20.2,90.2 20.8,82.2 13.0,83.6 15.1,75.9 7.1,75.7 10.7,68.6 2.9,66.8 7.8,60.6 0.5,57.3 6.6,52.1 0.1,47.5 7.0,43.6 1.5,37.9 9.0,35.3 4.8,28.6 12.7,27.6 9.8,20.2 17.8,20.8 16.4,13.0 24.1,15.1 24.3,7.1 31.4,10.7 33.2,2.9 39.4,7.8 42.7,0.5 47.9,6.6 52.5,0.1 56.4,7.0 62.1,1.5 64.7,9.0 71.4,4.8 72.4,12.7 79.8,9.8 79.2,17.8 87.0,16.4 84.9,24.1 92.9,24.3 89.3,31.4 97.1,33.2 92.2,39.4 99.5,42.7 93.4,47.9" fill="#66757a" stroke="#66757a" stroke-width="1.5" stroke-linejoin="round"/><circle cx="50" cy="50" r="35.5" fill="#fff"/><text transform="translate(49,69.2) scale(1.5,1)" text-anchor="middle" font-family="Liberation Serif,serif" font-weight="700" font-size="65" fill="#66757a" stroke="#66757a" stroke-width="2.4">R</text><circle cx="50.0" cy="10.5" r="2.6" fill="#fff"/><circle cx="12.4" cy="37.8" r="2.6" fill="#fff"/><circle cx="87.6" cy="37.8" r="2.6" fill="#fff"/><circle cx="26.8" cy="82.0" r="2.6" fill="#fff"/><circle cx="73.2" cy="82.0" r="2.6" fill="#fff"/></svg><div class="t" style="left:1979.5px;top:195.1px;font-size:33.8px;color:#3b3b3b;font-family:'Liberation Sans',sans-serif;font-weight:400;letter-spacing:0px;">client.rs</div><div class="t" style="left:1563.0px;top:262.5px;font-size:36.64px;color:#3b3b3b;font-family:'Liberation Sans',sans-serif;font-weight:400;letter-spacing:0px;">add a header for protocol versioning and</div><div class="t" style="left:1563.0px;top:314.5px;font-size:36.64px;color:#3b3b3b;font-family:'Liberation Sans',sans-serif;font-weight:400;letter-spacing:0px;">handlers for multiple versions</div><div style="left:1882.0px;top:407.5px;width:362.0px;height:53.0px;background:#ececec;border-radius:10px"></div><svg style="position:absolute;left:1896.0px;top:418.0px;" width="32" height="32" viewBox="0 0 32 32"><path d="M11 5L3 13l8 8M3 13h16a8.5 8.5 0 0 1 0 17h-6" fill="none" stroke="#8a8a8a" stroke-width="2.6" stroke-linecap="round" stroke-linejoin="round"/></svg><div class="t" style="left:1937.2px;top:417.2px;font-size:33.9px;color:#7a7a7a;font-family:'Liberation Sans',sans-serif;font-weight:400;letter-spacing:0px;">Restore checkpoint</div><div class="t" style="left:1554.2px;top:549.5px;font-size:38.4px;color:#3b3b3b;font-family:'Liberation Sans',sans-serif;font-weight:400;letter-spacing:0.62px;">I'll help you add protocol versioning to</div><div class="t" style="left:1554.2px;top:605.7px;font-size:38.4px;color:#3b3b3b;font-family:'Liberation Sans',sans-serif;font-weight:400;letter-spacing:0.62px;">the codebase. This is a good practice</div><div class="t" style="left:1554.2px;top:661.8px;font-size:38.4px;color:#3b3b3b;font-family:'Liberation Sans',sans-serif;font-weight:400;letter-spacing:0.62px;">for maintaining backward compatibility</div><div class="t" style="left:1554.2px;top:718.0px;font-size:38.4px;color:#3b3b3b;font-family:'Liberation Sans',sans-serif;font-weight:400;letter-spacing:0.62px;">as the protocol evolves. I'll add a</div><div class="t" style="left:1554.2px;top:774.1px;font-size:38.4px;color:#3b3b3b;font-family:'Liberation Sans',sans-serif;font-weight:400;letter-spacing:0.62px;">version header to the message format</div><div class="t" style="left:1554.2px;top:830.3px;font-size:38.4px;color:#3b3b3b;font-family:'Liberation Sans',sans-serif;font-weight:400;letter-spacing:0.62px;">and implement handlers for different</div><div class="t" style="left:1554.2px;top:886.5px;font-size:38.4px;color:#3b3b3b;font-family:'Liberation Sans',sans-serif;font-weight:400;letter-spacing:0.62px;">versions.</div><div class="t" style="left:1554.2px;top:960.0px;font-size:38.4px;color:#3b3b3b;font-family:'Liberation Sans',sans-serif;font-weight:400;letter-spacing:0.62px;">First, let me modify the</div><div class="t" style="left:1554.2px;top:1016.0px;font-size:38.4px;color:#3b3b3b;font-family:'Liberation Sans',sans-serif;font-weight:400;letter-spacing:0.62px;">add version support:</div><div class="t" style="left:1554.2px;top:1211.5px;font-size:38.4px;color:#3b3b3b;font-family:'Liberation Sans',sans-serif;font-weight:400;letter-spacing:0.62px;">Now I'll update the server code to</div><div class="t" style="left:1554.2px;top:1267.8px;font-size:38.4px;color:#3b3b3b;font-family:'Liberation Sans',sans-serif;font-weight:400;letter-spacing:0.62px;">handle the versioned messages:</div><div class="t" style="left:1554.2px;top:1463.0px;font-size:38.4px;color:#3b3b3b;font-family:'Liberation Sans',sans-serif;font-weight:400;letter-spacing:0.62px;">Finally, I'll update the client code to use</div><div class="t" style="left:1554.2px;top:1519.2px;font-size:38.4px;color:#3b3b3b;font-family:'Liberation Sans',sans-serif;font-weight:400;letter-spacing:0.62px;">the versioned messages:</div><div class="t" style="left:1976.5px;top:965.1px;font-size:32.6px;color:#2d5fa8;font-family:'DejaVu Sans Mono','Liberation Mono',monospace;font-weight:400;letter-spacing:0px;-webkit-text-stroke:0.4px #2d5fa8;">lib.rs</div><div class="t" style="left:2116.0px;top:960.0px;font-size:38.4px;color:#3b3b3b;font-family:'Liberation Sans',sans-serif;font-weight:400;letter-spacing:0.62px;">file to</div><div style="left:1552.3px;top:1090.4px;width:700.2px;height:85.3px;box-sizing:border-box;background:#fff;border:2.6px solid #2b5cae;border-radius:18px"></div><svg style="position:absolute;left:1588.5px;top:1118.9px" width="28" height="28" viewBox="0 0 100 100"><polygon points="99.9,52.5 93.0,56.4 98.5,62.1 91.0,64.7 95.2,71.4 87.3,72.4 90.2,79.8 82.2,79.2 83.6,87.0 75.9,84.9 75.7,92.9 68.6,89.3 66.8,97.1 60.6,92.2 57.3,99.5 52.1,93.4 47.5,99.9 43.6,93.0 37.9,98.5 35.3,91.0 28.6,95.2 27.6,87.3 20.2,90.2 20.8,82.2 13.0,83.6 15.1,75.9 7.1,75.7 10.7,68.6 2.9,66.8 7.8,60.6 0.5,57.3 6.6,52.1 0.1,47.5 7.0,43.6 1.5,37.9 9.0,35.3 4.8,28.6 12.7,27.6 9.8,20.2 17.8,20.8 16.4,13.0 24.1,15.1 24.3,7.1 31.4,10.7 33.2,2.9 39.4,7.8 42.7,0.5 47.9,6.6 52.5,0.1 56.4,7.0 62.1,1.5 64.7,9.0 71.4,4.8 72.4,12.7 79.8,9.8 79.2,17.8 87.0,16.4 84.9,24.1 92.9,24.3 89.3,31.4 97.1,33.2 92.2,39.4 99.5,42.7 93.4,47.9" fill="#66757a" stroke="#66757a" stroke-width="1.5" stroke-linejoin="round"/><circle cx="50" cy="50" r="35.5" fill="#fff"/><text transform="translate(49,69.2) scale(1.5,1)" text-anchor="middle" font-family="Liberation Serif,serif" font-weight="700" font-size="65" fill="#66757a" stroke="#66757a" stroke-width="2.4">R</text><circle cx="50.0" cy="10.5" r="2.6" fill="#fff"/><circle cx="12.4" cy="37.8" r="2.6" fill="#fff"/><circle cx="87.6" cy="37.8" r="2.6" fill="#fff"/><circle cx="26.8" cy="82.0" r="2.6" fill="#fff"/><circle cx="73.2" cy="82.0" r="2.6" fill="#fff"/></svg><div class="t" style="left:1637.6px;top:1116.2px;font-size:33.9px;color:#3b3b3b;font-family:'Liberation Sans',sans-serif;font-weight:400;letter-spacing:0px;">lib.rs</div><div class="t" style="left:1728.5px;top:1115.9px;font-size:34.2px;color:#587c1c;font-family:'Liberation Sans',sans-serif;font-weight:400;letter-spacing:0px;">+99</div><div class="t" style="left:1801.8px;top:1115.9px;font-size:34.2px;color:#a3271b;font-family:'Liberation Sans',sans-serif;font-weight:400;letter-spacing:0px;">-67</div><div style="left:1869.0px;top:1126.9px;width:12.0px;height:12.0px;border-radius:50%;background:#82c99a"></div><svg style="position:absolute;left:2076px;top:1090.4px" width="160" height="86" viewBox="0 0 160 86" fill="none" stroke-linecap="round" stroke-linejoin="round"><path d="M12.2 34.8l16.8 16.8M29 34.8L12.2 51.600" stroke="#969696" stroke-width="2.400"/><path d="M69.300 43l8.700 10.300 14.300-22.600" stroke="#969696" stroke-width="3.200"/><path d="M127.700 37.900l7.800-8.500 8.100 8.500M127.700 44.700l7.800 8.300 8.100-8.300" stroke="#d0d0d0" stroke-width="2.200"/></svg><div style="left:1552.3px;top:1341.8px;width:700.2px;height:85.3px;box-sizing:border-box;background:#fff;border:2.6px solid #2b5cae;border-radius:18px"></div><svg style="position:absolute;left:1588.5px;top:1370.3px" width="28" height="28" viewBox="0 0 100 100"><polygon points="99.9,52.5 93.0,56.4 98.5,62.1 91.0,64.7 95.2,71.4 87.3,72.4 90.2,79.8 82.2,79.2 83.6,87.0 75.9,84.9 75.7,92.9 68.6,89.3 66.8,97.1 60.6,92.2 57.3,99.5 52.1,93.4 47.5,99.9 43.6,93.0 37.9,98.5 35.3,91.0 28.6,95.2 27.6,87.3 20.2,90.2 20.8,82.2 13.0,83.6 15.1,75.9 7.1,75.7 10.7,68.6 2.9,66.8 7.8,60.6 0.5,57.3 6.6,52.1 0.1,47.5 7.0,43.6 1.5,37.9 9.0,35.3 4.8,28.6 12.7,27.6 9.8,20.2 17.8,20.8 16.4,13.0 24.1,15.1 24.3,7.1 31.4,10.7 33.2,2.9 39.4,7.8 42.7,0.5 47.9,6.6 52.5,0.1 56.4,7.0 62.1,1.5 64.7,9.0 71.4,4.8 72.4,12.7 79.8,9.8 79.2,17.8 87.0,16.4 84.9,24.1 92.9,24.3 89.3,31.4 97.1,33.2 92.2,39.4 99.5,42.7 93.4,47.9" fill="#66757a" stroke="#66757a" stroke-width="1.5" stroke-linejoin="round"/><circle cx="50" cy="50" r="35.5" fill="#fff"/><text transform="translate(49,69.2) scale(1.5,1)" text-anchor="middle" font-family="Liberation Serif,serif" font-weight="700" font-size="65" fill="#66757a" stroke="#66757a" stroke-width="2.4">R</text><circle cx="50.0" cy="10.5" r="2.6" fill="#fff"/><circle cx="12.4" cy="37.8" r="2.6" fill="#fff"/><circle cx="87.6" cy="37.8" r="2.6" fill="#fff"/><circle cx="26.8" cy="82.0" r="2.6" fill="#fff"/><circle cx="73.2" cy="82.0" r="2.6" fill="#fff"/></svg><div class="t" style="left:1653.3px;top:1367.6px;font-size:33.9px;color:#3b3b3b;font-family:'Liberation Sans',sans-serif;font-weight:400;letter-spacing:0px;">...er.rs</div><div class="t" style="left:1762.3px;top:1367.3px;font-size:34.2px;color:#587c1c;font-family:'Liberation Sans',sans-serif;font-weight:400;letter-spacing:0px;">+12</div><div class="t" style="left:1835.9px;top:1367.3px;font-size:34.2px;color:#a3271b;font-family:'Liberation Sans',sans-serif;font-weight:400;letter-spacing:0px;">-6</div><div style="left:1883.0px;top:1378.3px;width:12.0px;height:12.0px;border-radius:50%;background:#82c99a"></div><svg style="position:absolute;left:2076px;top:1341.8px" width="160" height="86" viewBox="0 0 160 86" fill="none" stroke-linecap="round" stroke-linejoin="round"><path d="M12.2 34.8l16.8 16.8M29 34.8L12.2 51.600" stroke="#969696" stroke-width="2.400"/><path d="M69.300 43l8.700 10.300 14.300-22.600" stroke="#969696" stroke-width="3.200"/><path d="M127.700 37.900l7.800-8.500 8.100 8.500M127.700 44.700l7.800 8.300 8.100-8.300" stroke="#d0d0d0" stroke-width="2.200"/></svg><div style="left:1552.3px;top:1594.3px;width:700.2px;height:85.3px;box-sizing:border-box;background:#fff;border:2.6px solid #2b5cae;border-radius:18px"></div><svg style="position:absolute;left:1588.5px;top:1622.8px" width="28" height="28" viewBox="0 0 100 100"><polygon points="99.9,52.5 93.0,56.4 98.5,62.1 91.0,64.7 95.2,71.4 87.3,72.4 90.2,79.8 82.2,79.2 83.6,87.0 75.9,84.9 75.7,92.9 68.6,89.3 66.8,97.1 60.6,92.2 57.3,99.5 52.1,93.4 47.5,99.9 43.6,93.0 37.9,98.5 35.3,91.0 28.6,95.2 27.6,87.3 20.2,90.2 20.8,82.2 13.0,83.6 15.1,75.9 7.1,75.7 10.7,68.6 2.9,66.8 7.8,60.6 0.5,57.3 6.6,52.1 0.1,47.5 7.0,43.6 1.5,37.9 9.0,35.3 4.8,28.6 12.7,27.6 9.8,20.2 17.8,20.8 16.4,13.0 24.1,15.1 24.3,7.1 31.4,10.7 33.2,2.9 39.4,7.8 42.7,0.5 47.9,6.6 52.5,0.1 56.4,7.0 62.1,1.5 64.7,9.0 71.4,4.8 72.4,12.7 79.8,9.8 79.2,17.8 87.0,16.4 84.9,24.1 92.9,24.3 89.3,31.4 97.1,33.2 92.2,39.4 99.5,42.7 93.4,47.9" fill="#66757a" stroke="#66757a" stroke-width="1.5" stroke-linejoin="round"/><circle cx="50" cy="50" r="35.5" fill="#fff"/><text transform="translate(49,69.2) scale(1.5,1)" text-anchor="middle" font-family="Liberation Serif,serif" font-weight="700" font-size="65" fill="#66757a" stroke="#66757a" stroke-width="2.4">R</text><circle cx="50.0" cy="10.5" r="2.6" fill="#fff"/><circle cx="12.4" cy="37.8" r="2.6" fill="#fff"/><circle cx="87.6" cy="37.8" r="2.6" fill="#fff"/><circle cx="26.8" cy="82.0" r="2.6" fill="#fff"/><circle cx="73.2" cy="82.0" r="2.6" fill="#fff"/></svg><div class="t" style="left:1637.7px;top:1620.1px;font-size:33.9px;color:#3b3b3b;font-family:'Liberation Sans',sans-serif;font-weight:400;letter-spacing:0px;">client.rs</div><div class="t" style="left:1775.8px;top:1619.8px;font-size:34.2px;color:#587c1c;font-family:'Liberation Sans',sans-serif;font-weight:400;letter-spacing:0px;">+4</div><div class="t" style="left:1828.9px;top:1619.8px;font-size:34.2px;color:#a3271b;font-family:'Liberation Sans',sans-serif;font-weight:400;letter-spacing:0px;">-4</div><div style="left:1876.0px;top:1630.8px;width:12.0px;height:12.0px;border-radius:50%;background:#82c99a"></div><svg style="position:absolute;left:2076px;top:1594.3px" width="160" height="86" viewBox="0 0 160 86" fill="none" stroke-linecap="round" stroke-linejoin="round"><path d="M12.2 34.8l16.8 16.8M29 34.8L12.2 51.600" stroke="#969696" stroke-width="2.400"/><path d="M69.300 43l8.700 10.300 14.300-22.600" stroke="#969696" stroke-width="3.200"/><path d="M127.700 37.900l7.800-8.500 8.100 8.500M127.700 44.700l7.800 8.300 8.100-8.300" stroke="#d0d0d0" stroke-width="2.200"/></svg><div style="left:1549.4px;top:1720.4px;width:707.0px;height:100.0px;box-sizing:border-box;background:#fdfdfd;border:2px solid #e6e6e6;border-radius:20px"></div><svg style="position:absolute;left:1582.0px;top:1743.0px;" width="18" height="30" viewBox="0 0 18 30"><polyline points="3.5,5 13.5,14.7 3.5,24.4" fill="none" stroke="#6a6a6a" stroke-width="2.1"/></svg><div class="t" style="left:1618.7px;top:1740.8px;font-size:33.9px;color:#585858;font-family:'Liberation Sans',sans-serif;font-weight:400;letter-spacing:0px;">3 files</div><div class="t" style="left:1721.3px;top:1741.2px;font-size:33.4px;color:#7d9a4a;font-family:'Liberation Sans',sans-serif;font-weight:400;letter-spacing:-1.6px;">+115</div><div class="t" style="left:1797.7px;top:1741.2px;font-size:33.4px;color:#b5483a;font-family:'Liberation Sans',sans-serif;font-weight:400;letter-spacing:0px;">-77</div><div style="left:2060.0px;top:1730.5px;width:177.6px;height:52.3px;background:#ececec;border-radius:10px"></div><div class="t" style="left:2075.4px;top:1740.3px;font-size:33.9px;color:#777;font-family:'Liberation Sans',sans-serif;font-weight:400;letter-spacing:0px;">Accept all</div><div style="left:1531.2px;top:1791.0px;width:743.0px;height:275.2px;box-sizing:border-box;background:#fff;border:2px solid #e4e4e4;border-radius:21px"></div><div class="pill" style="left:1557.0px;top:1817.0px;width:49.6px;height:50.0px;"></div><div class="t" style="left:1564.8px;top:1824.0px;font-size:32.5px;color:#666;font-family:'Liberation Sans',sans-serif;font-weight:400;letter-spacing:0px;">@</div><div class="pill" style="left:1620.7px;top:1817.0px;width:139.6px;height:50.0px;"></div><svg style="position:absolute;left:1634px;top:1829.6px" width="24" height="24" viewBox="0 0 100 100"><polygon points="99.9,52.5 93.0,56.4 98.5,62.1 91.0,64.7 95.2,71.4 87.3,72.4 90.2,79.8 82.2,79.2 83.6,87.0 75.9,84.9 75.7,92.9 68.6,89.3 66.8,97.1 60.6,92.2 57.3,99.5 52.1,93.4 47.5,99.9 43.6,93.0 37.9,98.5 35.3,91.0 28.6,95.2 27.6,87.3 20.2,90.2 20.8,82.2 13.0,83.6 15.1,75.9 7.1,75.7 10.7,68.6 2.9,66.8 7.8,60.6 0.5,57.3 6.6,52.1 0.1,47.5 7.0,43.6 1.5,37.9 9.0,35.3 4.8,28.6 12.7,27.6 9.8,20.2 17.8,20.8 16.4,13.0 24.1,15.1 24.3,7.1 31.4,10.7 33.2,2.9 39.4,7.8 42.7,0.5 47.9,6.6 52.5,0.1 56.4,7.0 62.1,1.5 64.7,9.0 71.4,4.8 72.4,12.7 79.8,9.8 79.2,17.8 87.0,16.4 84.9,24.1 92.9,24.3 89.3,31.4 97.1,33.2 92.2,39.4 99.5,42.7 93.4,47.9" fill="#66757a" stroke="#66757a" stroke-width="1.5" stroke-linejoin="round"/><circle cx="50" cy="50" r="35.5" fill="#fff"/><text transform="translate(49,69.2) scale(1.5,1)" text-anchor="middle" font-family="Liberation Serif,serif" font-weight="700" font-size="65" fill="#66757a" stroke="#66757a" stroke-width="2.4">R</text><circle cx="50.0" cy="10.5" r="2.6" fill="#fff"/><circle cx="12.4" cy="37.8" r="2.6" fill="#fff"/><circle cx="87.6" cy="37.8" r="2.6" fill="#fff"/><circle cx="26.8" cy="82.0" r="2.6" fill="#fff"/><circle cx="73.2" cy="82.0" r="2.6" fill="#fff"/></svg><div class="t" style="left:1674.5px;top:1825.1px;font-size:33.8px;color:#3b3b3b;font-family:'Liberation Sans',sans-serif;font-weight:400;letter-spacing:0px;">lib.rs</div><div class="pill" style="left:1772.4px;top:1817.0px;width:197.6px;height:50.0px;"></div><svg style="position:absolute;left:1786px;top:1829.6px" width="24" height="24" viewBox="0 0 100 100"><polygon points="99.9,52.5 93.0,56.4 98.5,62.1 91.0,64.7 95.2,71.4 87.3,72.4 90.2,79.8 82.2,79.2 83.6,87.0 75.9,84.9 75.7,92.9 68.6,89.3 66.8,97.1 60.6,92.2 57.3,99.5 52.1,93.4 47.5,99.9 43.6,93.0 37.9,98.5 35.3,91.0 28.6,95.2 27.6,87.3 20.2,90.2 20.8,82.2 13.0,83.6 15.1,75.9 7.1,75.7 10.7,68.6 2.9,66.8 7.8,60.6 0.5,57.3 6.6,52.1 0.1,47.5 7.0,43.6 1.5,37.9 9.0,35.3 4.8,28.6 12.7,27.6 9.8,20.2 17.8,20.8 16.4,13.0 24.1,15.1 24.3,7.1 31.4,10.7 33.2,2.9 39.4,7.8 42.7,0.5 47.9,6.6 52.5,0.1 56.4,7.0 62.1,1.5 64.7,9.0 71.4,4.8 72.4,12.7 79.8,9.8 79.2,17.8 87.0,16.4 84.9,24.1 92.9,24.3 89.3,31.4 97.1,33.2 92.2,39.4 99.5,42.7 93.4,47.9" fill="#66757a" stroke="#66757a" stroke-width="1.5" stroke-linejoin="round"/><circle cx="50" cy="50" r="35.5" fill="#fff"/><text transform="translate(49,69.2) scale(1.5,1)" text-anchor="middle" font-family="Liberation Serif,serif" font-weight="700" font-size="65" fill="#66757a" stroke="#66757a" stroke-width="2.4">R</text><circle cx="50.0" cy="10.5" r="2.6" fill="#fff"/><circle cx="12.4" cy="37.8" r="2.6" fill="#fff"/><circle cx="87.6" cy="37.8" r="2.6" fill="#fff"/><circle cx="26.8" cy="82.0" r="2.6" fill="#fff"/><circle cx="73.2" cy="82.0" r="2.6" fill="#fff"/></svg><div class="t" style="left:1826.5px;top:1825.1px;font-size:33.8px;color:#3b3b3b;font-family:'Liberation Sans',sans-serif;font-weight:400;letter-spacing:0px;">server.rs</div><div class="pill" style="left:1982.8px;top:1817.0px;width:187.2px;height:50.0px;"></div><svg style="position:absolute;left:1996.5px;top:1829.6px" width="24" height="24" viewBox="0 0 100 100"><polygon points="99.9,52.5 93.0,56.4 98.5,62.1 91.0,64.7 95.2,71.4 87.3,72.4 90.2,79.8 82.2,79.2 83.6,87.0 75.9,84.9 75.7,92.9 68.6,89.3 66.8,97.1 60.6,92.2 57.3,99.5 52.1,93.4 47.5,99.9 43.6,93.0 37.9,98.5 35.3,91.0 28.6,95.2 27.6,87.3 20.2,90.2 20.8,82.2 13.0,83.6 15.1,75.9 7.1,75.7 10.7,68.6 2.9,66.8 7.8,60.6 0.5,57.3 6.6,52.1 0.1,47.5 7.0,43.6 1.5,37.9 9.0,35.3 4.8,28.6 12.7,27.6 9.8,20.2 17.8,20.8 16.4,13.0 24.1,15.1 24.3,7.1 31.4,10.7 33.2,2.9 39.4,7.8 42.7,0.5 47.9,6.6 52.5,0.1 56.4,7.0 62.1,1.5 64.7,9.0 71.4,4.8 72.4,12.7 79.8,9.8 79.2,17.8 87.0,16.4 84.9,24.1 92.9,24.3 89.3,31.4 97.1,33.2 92.2,39.4 99.5,42.7 93.4,47.9" fill="#66757a" stroke="#66757a" stroke-width="1.5" stroke-linejoin="round"/><circle cx="50" cy="50" r="35.5" fill="#fff"/><text transform="translate(49,69.2) scale(1.5,1)" text-anchor="middle" font-family="Liberation Serif,serif" font-weight="700" font-size="65" fill="#66757a" stroke="#66757a" stroke-width="2.4">R</text><circle cx="50.0" cy="10.5" r="2.6" fill="#fff"/><circle cx="12.4" cy="37.8" r="2.6" fill="#fff"/><circle cx="87.6" cy="37.8" r="2.6" fill="#fff"/><circle cx="26.8" cy="82.0" r="2.6" fill="#fff"/><circle cx="73.2" cy="82.0" r="2.6" fill="#fff"/></svg><div class="t" style="left:2037.0px;top:1825.1px;font-size:33.8px;color:#3b3b3b;font-family:'Liberation Sans',sans-serif;font-weight:400;letter-spacing:0px;">client.rs</div><div class="t" style="left:1557.5px;top:1891.6px;font-size:36.33px;color:#b9b9b9;font-family:'Liberation Sans',sans-serif;font-weight:400;letter-spacing:0px;">Plan, search, build anything</div><div style="left:1556.2px;top:1988.8px;width:243.8px;height:52.2px;background:#f0f0f0;border-radius:27px"></div><svg style="position:absolute;left:1572.5px;top:2006.4px;" width="30" height="16.4" viewBox="0 0 33 18"><path d="M16.5 9C13.5 4.5 11 2.2 7.8 2.2a6.8 6.8 0 0 0 0 13.6c3.2 0 5.7-2.3 8.7-6.8s5.500-6.8 8.700-6.8a6.800 6.800 0 0 1 0 13.600c-3.200 0-5.700-2.300-8.700-6.800z" fill="none" stroke="#8c8c8c" stroke-width="2.3"/></svg><div class="t" style="left:1615.5px;top:1997.3px;font-size:33.2px;color:#7d7d7d;font-family:'Liberation Sans',sans-serif;font-weight:400;letter-spacing:0.3px;-webkit-text-stroke:0.8px #7d7d7d;">Agent</div><div class="t" style="left:1716.0px;top:2002.2px;font-size:27px;color:#a0a0a0;font-family:'DejaVu Sans Mono','Liberation Mono',monospace;font-weight:400;letter-spacing:0.8px;">⌘I</div><svg style="position:absolute;left:1767.0px;top:2006.0px;" width="16" height="12" viewBox="0 0 16 12"><polyline points="1.5,10 8,2.5 14.5,10" fill="none" stroke="#9a9a9a" stroke-width="2"/></svg><div class="t" style="left:1824.0px;top:1999.2px;font-size:32.8px;color:#8f8f8f;font-family:'Liberation Sans',sans-serif;font-weight:400;letter-spacing:0px;">Auto</div><svg style="position:absolute;left:1903.0px;top:2006.0px;" width="16" height="12" viewBox="0 0 16 12"><polyline points="1.5,10 8,2.5 14.5,10" fill="none" stroke="#c0c0c0" stroke-width="2"/></svg><svg style="position:absolute;left:2136.0px;top:2001.0px;" width="37" height="30" viewBox="0 0 37 30"><rect x="2.6" y="3.2" width="31.2" height="23.6" rx="3.2" fill="none" stroke="#9a9a9a" stroke-width="2.6"/><circle cx="12.3" cy="11.7" r="3.3" fill="#9a9a9a"/><path d="M3 22.500l6.800-6.300 4.600 3.800 7.800-6.600 11 9.800v3.300H3z" fill="#9a9a9a"/></svg><div style="left:2200.3px;top:1990.8px;width:48.6px;height:48.6px;border-radius:50%;background:#d0d0d0"></div><svg style="position:absolute;left:2210.0px;top:1997.0px;" width="30" height="34" viewBox="0 0 30 34"><path d="M14.700 29.900V5M4.900 14.900L14.700 4.800l9.900 10.100" fill="none" stroke="#fff" stroke-width="3.200" stroke-linecap="round" stroke-linejoin="round"/></svg><div style="left:0.0px;top:2095.0px;width:2304.0px;height:63.0px;background:#f8f8f8"></div><div style="left:0.0px;top:2095.0px;width:2304.0px;height:3.0px;background:#e5e5e5"></div><div style="left:0.0px;top:2098.0px;width:98.0px;height:60.0px;background:#2a5db0"></div><svg style="position:absolute;left:34.0px;top:2105.0px;" width="30" height="40" viewBox="0 0 30 40"><polyline points="3,14.5 14,25 3,36" fill="none" stroke="#fff" stroke-width="2.3"/><polyline points="26.5,4 16,14.5 26.5,25.5" fill="none" stroke="#fff" stroke-width="2.3"/></svg><div class="t" style="left:2083.5px;top:2109.0px;font-size:35.8px;color:#3b3b3b;font-family:'Liberation Sans',sans-serif;font-weight:400;letter-spacing:0px;">Cursor Tab</div></div></body></html>
